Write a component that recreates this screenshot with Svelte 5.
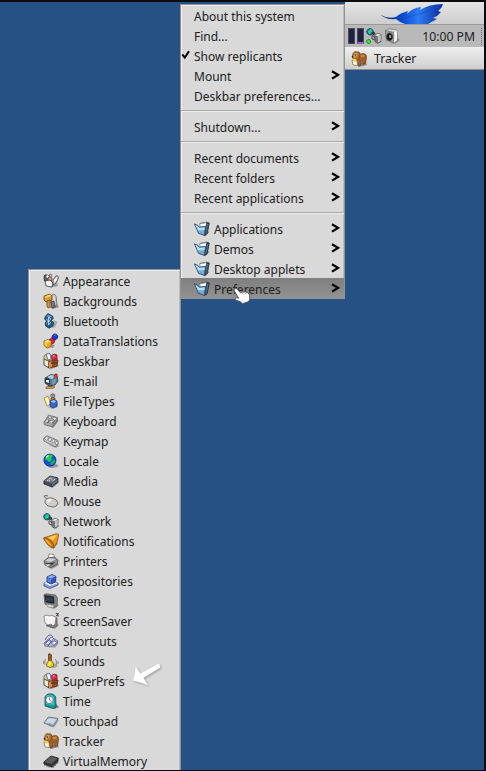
<script>
  const menuGroups = [
    [
      { label: 'About this system' },
      { label: 'Find...' },
      { label: 'Show replicants', checked: true },
      { label: 'Mount', sub: true },
      { label: 'Deskbar preferences...' }
    ],
    [{ label: 'Shutdown...', sub: true }],
    [
      { label: 'Recent documents', sub: true },
      { label: 'Recent folders', sub: true },
      { label: 'Recent applications', sub: true }
    ],
    [
      { label: 'Applications', sub: true, icon: 'folder' },
      { label: 'Demos', sub: true, icon: 'folder' },
      { label: 'Desktop applets', sub: true, icon: 'folder' },
      { label: 'Preferences', sub: true, icon: 'folder', selected: true }
    ]
  ];

  const preferences = [
    'Appearance', 'Backgrounds', 'Bluetooth', 'DataTranslations', 'Deskbar',
    'E-mail', 'FileTypes', 'Keyboard', 'Keymap', 'Locale', 'Media', 'Mouse',
    'Network', 'Notifications', 'Printers', 'Repositories', 'Screen',
    'ScreenSaver', 'Shortcuts', 'Sounds', 'SuperPrefs', 'Time', 'Touchpad',
    'Tracker', 'VirtualMemory'
  ];

  const K = '#26262b';
  const box = [
    ['M4 14L8 16L16 13L14 11Z', '#8a8a8a'],
    ['M1 6L6 8L6 15L1 12Z', '#f0e9cf', K],
    ['M6 8L15 7L14 13L6 15Z', '#9a5326', '#4b2410'],
    ['M6 9L9 8.5L9 14L6 15Z', '#d88b45'],
    ['M1 3L4 1L6 4L6 8L1 6Z', '#ead24b', '#5d5d80'],
    ['M3 1L7 .5L8 6L5 7Z', '#f5f5fa', '#4458a0'],
    ['M8.5 2.5Q11 0 14 2L14 7L9 7Z', '#e12a3c', '#7b1b2a'],
    ['M10 2L12 2L11 4L9.5 4Z', '#ff8a90'],
    ['M8 9.5L14 9L13.5 10.5L8 11Z', '#5b2a10']
  ];
  const globe = [
    ['M5 14Q10 16 15.5 13.5Q15 11 12 11Z', '#9a9a9a'],
    ['M7 1.2A6 6 0 1 1 6.9 1.2Z', '#174be0', '#0b236d'],
    ['M5 2Q9 1 10 3L8 5L9 7L6 9L4 7L2 7Q2 4 5 2Z', '#20d343'],
    ['M9 8L12 6L12 9L9 12L7 11Z', '#15b84a'],
    ['M3 3L6 2L5 4L3 5Z', '#a4f5cb']
  ];
  const network = [
    ['M10 14.5L13 15.8L16 13L15 12Z', '#909090'],
    ['M4 .6A3.2 3.2 0 1 1 3.9 .6Z', '#137fc0', '#12324d'],
    ['M3 2L5 1L6 3L5 5L3 6L2 4Z', '#2ed673'],
    ['M5.5 7L9 10M6 8L6 11L9 12', 'none', '#282828'],
    ['M8.6 7.4L11.4 5.4L15 6.4L14.8 13.4L11.6 15.2L9 13.6Z', '#77797b', '#4a4c4e'],
    ['M12 8L14.8 7L14.6 13L12 14.6Z', '#c2c4c6'],
    ['M9 7.4L11.6 5.8L14.8 6.6L12 8Z', '#e8e8e8'],
    ['M6 4.5L8 4L9 6L7 7Z', '#3c5750', '#222']
  ];
  const tracker = [
    ['M5 14L8 16L16 14L14 10Z', '#8b8b8b'],
    ['M7 3.4L13 2.6Q16 3.4 15.4 7L14.5 12.5L12.2 13.5L11.5 9.5L10 10L10 14L7 15L6 9Z', '#a0602a', '#6b4119'],
    ['M2.2 2.4L3.5 .8L8 1Q9.5 3 8.6 6L7 8.5L2.4 8L1.2 6Z', '#b0702f', '#6b4119'],
    ['M3.5 2L6.5 2L6 5L3 7L2 6Z', '#d69c59'],
    ['M9.5 4L13 3.4L14 5.2L10 6.4Z', '#cc8b45'],
    ['M1 9L6 9.5L6.5 14.5L2 14Z', '#f9f5e5', '#8b7750'],
    ['M1 8.5L3 7.6L6 8.8L4 11Z', '#ecd451'],
    ['M3.8 3.5h1.2v1.1h-1.2ZM.9 5.3h1.3v1.1h-1.3Z', '#17130f']
  ];

  const icons = {
    folder: [
      ['M8 13L11 15.6L15.5 11L14 10Z', '#8b8f93'],
      ['M6 2.5L12.6 1.2L15.2 2L13.2 12.5L10.4 14.5Z', '#4d6c88', '#27323e'],
      ['M5.6 3L12 1.6L12.6 3L10.8 11L7 11Z', '#fbfcff', '#8793a0'],
      ['M12.7 2.5L15 2.4L13 12.4L10.8 14.2Z', '#52728e', '#27323e'],
      ['M.4 2.8L3.6 4.4L5.4 6L11.4 5.4L10.6 14.4L4.6 12.4Z', '#74acd4', '#233d52'],
      ['M1.3 3.8L3.8 5.4L5.8 7L10.7 6.4L10.4 9L4 9.6Z', '#b3def5']
    ],
    Appearance: [
      ['M5 12L8 14.5L15 13L14 10Z', '#9b9b9b'],
      ['M1 4Q1 1 4 2L7 3L8 7L4 9L1.5 8Z', '#5f6064', '#28282c'],
      ['M3 3L5 2L6 4L4 5Z', '#fff'],
      ['M5 5Q8 2 9 6L8 9L5 8Z', '#dc9c83', '#56372f'],
      ['M2 8L7 7L10 10L9 14L3 13Z', '#f5f5f5', '#363636'],
      ['M6 2L8 1L9 3L7 4Z', '#fff', '#555'],
      ['M10 12L10 7L13 3Q16 2 15 6L13 10Z', '#dedee0', '#333'],
      ['M11 8L14 4L13 8Z', '#fff']
    ],
    Backgrounds: [
      ['M6 14L10 16L16 14L14 11Z', '#8f8f8f'],
      ['M8 3L11 1L13 3L14 12L10 14L8 10Z', '#c7c5c2', '#646260'],
      ['M11 3L11 12', 'none', '#fff'],
      ['M1 3L7 1L9 3L9 7L3 9L1 7Z', '#d79a2b', '#644515'],
      ['M1.5 3.5L7 1.5L8.4 3L3 5Z', '#ffd56c'],
      ['M4 8L7 7L7 14L5 15L4 13Z', '#dc9b2d', '#694614'],
      ['M8 9L11 8L12 14L9 15Z', '#7b7c82', '#393940']
    ],
    Bluetooth: [
      ['M6 15L12 14.5L14.5 9L11 7Z', '#a9a9a9'],
      ['M2.5 3L5 .6L9.6 3.2L10.2 5.5L8.3 7.6L10.6 9.6L9.8 13L6 15.2L2.6 13L2.2 9.5L3.8 8L1.6 6.2Z', '#235a86', '#143049'],
      ['M3.4 3.4L5.2 1.6L8.8 3.6L7 5.4Z', '#5b9ac4'],
      ['M3.2 6L7.6 9.6L5.5 12L5.5 4L7.8 6L3.4 10', 'none', '#cfe6f5']
    ],
    DataTranslations: [
      ['M6 14L10 15L12 12L9 11Z', '#999'],
      ['M6 7L9 4.5L12 7L11 10L8 11Z', '#df203b', '#7d172b'],
      ['M12 1A2.8 2.8 0 1 1 11.9 1Z', '#2038db', '#102165'],
      ['M11 2L13 1.5L12 3Z', '#8094ff'],
      ['M1 8L5 6.5L8.5 8.5L8 13.5L4 15L1 12.5Z', '#f3a514', '#805111'],
      ['M1.5 8L5 7L8 8.5L4 10Z', '#fff283'],
      ['M1.5 9L4 10.5L4 14L1.5 12Z', '#ffd635']
    ],
    Deskbar: box,
    SuperPrefs: box,
    'E-mail': [
      ['M3 14L8 13L12 14L9 16L3 15.5Z', '#d69a48', '#8b622c'],
      ['M6 11L9 11L9 14L6 14Z', '#8c643c'],
      ['M2 5L8 1.5L14 3L15 8L12 12L6 13L2 10Z', '#56798f', '#1e303c'],
      ['M3 4.5L8 2L13 3L9 6Z', '#afd0df'],
      ['M2 6Q5 2 7 7L7 12L2 10Z', '#263944'],
      ['M3 7L6 7L6 10L3 9Z', '#e5edf0'],
      ['M9 7L14 5L12 11L9 11.5Z', '#7297ab'],
      ['M11 5L12 1L14 1L14 4', '#ef3e45', '#8d1720']
    ],
    FileTypes: [
      ['M5 14L9 16L15 14L14 10Z', '#a0a0a0'],
      ['M1 5L5 3L8 11L4 13Z', '#fff5aa', '#8c8038'],
      ['M9.8 .8A2 2 0 1 1 9.7 .8Z', '#9c9ca1', '#43434a'],
      ['M8 5L12 5L12 9L8 9Z', '#d79632', '#624111'],
      ['M7 8L10.5 6.5L14 8L14 13L10.5 15L7 13Z', '#3766d0', '#18377f'],
      ['M7.5 8.3L10.5 7L13.4 8.2L10.5 10Z', '#9fbeff']
    ],
    Keyboard: [
      ['M6 13L10 15L15.5 8L14 5Z', '#808080'],
      ['M.8 9.6L5.5 2.2L14.6 4.6L13 9L9 13.6L1.5 11.8Z', '#a8a8a8', '#6a6a6a'],
      ['M2 8.5L4 6L6 7L4.4 10ZM5 4.6L6.4 2.8L9 3.6L7.6 6ZM6.4 9L8 7L10.4 8L8.6 11ZM9.6 5.6L11 4L13.8 5L12 8Z', '#dedede', '#777'],
      ['M4.6 10.2L6.2 7.2M9.8 11.2L11.6 8.4', 'none', '#4e4e4e']
    ],
    Keymap: [
      ['M6 12L13 15L16 13L14 10Z', '#a0a0a0'],
      ['M.6 5.4L4 2.8L15 7.6L15 11.6L12 13.8L1 8Z', '#c7c7c7', '#636363'],
      ['M1.2 5.4L4 3.4L5.6 5L3.5 7.4ZM5 6.4L7.2 4.8L8.8 6.4L7 9ZM8.5 8L10.7 6.4L12.2 7.8L10 10.6ZM12 9.6L14 8L15 9.4L13.3 12.3Z', '#eee', '#777']
    ],
    Locale: globe,
    Media: [
      ['M7 13L9 15L16 10L14 8Z', '#9d9d9d'],
      ['M.8 8L7 3L15 5L15 9L9 14L1 11Z', '#454d58', '#242932'],
      ['M1 8L7 3.5L14.5 5.5L9 10Z', '#717985'],
      ['M4 8L5.5 7L7 8.2M6 6L8 5L9 6.5M9.5 8L12 6.2', 'none', '#e9edf0'],
      ['M9 10.5L14.5 6.5L14.5 8.5L9 13Z', '#666f7d']
    ],
    Mouse: [
      ['M6 13Q12 16 15.5 11L13 9Z', '#929292'],
      ['M5.5 6Q1 5 1 3Q3 2 5 3', 'none', '#4b4b4b'],
      ['M2 8Q4 4 9 5Q14 6 15 10Q14 14 10 14Q4 14 2 10Z', '#ccccca', '#5c5c59'],
      ['M3 8Q5 5 8.5 6Q9 8 5 10Z', '#eeeeeb']
    ],
    Network: network,
    Notifications: [
      ['M8 14L10 15L15 11L13 7Z', '#999'],
      ['M.6 5L13 .8L15.6 1.2Q15.6 4 14 9L11 15L8 13.6Z', '#ee9516', '#8a520d'],
      ['M4 5L14.4 1.6L10 7.6Z', '#ffcb68'],
      ['M.6 5Q4 4.4 7.6 7Q11.4 11 11 15Q8 15.6 4.6 11.6Q1.6 8 .6 5Z', '#c4740f', '#80500f'],
      ['M1.8 6Q5 7 9.4 13.4Q6.6 12.6 4.4 9.8Q2.4 7.6 1.8 6Z', '#ffb43b']
    ],
    Printers: [
      ['M4 14L9 16L16 12L14 9Z', '#919191'],
      ['M5 5L6 1L11 1.5L12 6Z', '#fff', '#777'],
      ['M1 8Q4 4 11 4L15 7L14.5 11L8 14.5L2 12Z', '#8e8e8e', '#4a4a4a'],
      ['M2 8L6 5L13 6L8 9Z', '#ccc'],
      ['M2 10L7 10L12 9L8 13Z', '#333'],
      ['M2 11.4L6 11L8.4 12L4.4 13.4Z', '#fff', '#777']
    ],
    Repositories: [
      ['M1 10L6 8L15 10L15 12L7 15.5L1 13Z', '#8696dc', '#444f91'],
      ['M1 10L6 8L15 10L7 13Z', '#eef1ff'],
      ['M4 4L9 1.5L13 3.5L12.5 9L8 11L4 9Z', '#3156bc', '#1b2d69'],
      ['M4.5 4L9 2L12.5 3.5L8 5.5Z', '#91adff'],
      ['M4.5 5L8 6L8 10L4.5 8.5Z', '#5f83e3']
    ],
    Screen: [
      ['M6 14L12 16L16 12L13 10Z', '#a5a5a5'],
      ['M1 2L3 .8L12.4 2L14.4 5L14 13L10 15L2 11Z', '#87888b', '#555'],
      ['M1.2 1.8L11 3.4L11.4 11L2.4 9.6Z', '#18191e', '#666'],
      ['M2.5 3.4L9.7 4.6L10 9.2L3.2 8.2Z', '#323d55'],
      ['M3 11L11 12.4L10 15L4.6 13.6Z', '#dedede', '#888']
    ],
    ScreenSaver: [
      ['M6 14L12 16L16 12L13 10Z', '#a5a5a5'],
      ['M11 4L14 5L14 13L10 15L3 12.5L9 12Z', '#818181', '#555'],
      ['M1 3L4 2L6 3L9 2.5L13 4L12 11L10 13L8 11L5 12L2 10Z', '#fafafa', '#777'],
      ['M4 5L4 10M7 5L7 10M10 5L10 11', 'none', '#dedede'],
      ['M12.8 .6h2.8l-2.2 2.2h2.4', 'none', '#151515']
    ],
    Shortcuts: [
      ['M8 14L12 15L16 10L13 8Z', '#aaa'],
      ['M1 10L8 4L15 8L14 11L8 14L2 13Z', '#b5b6c4', '#62647e'],
      ['M2 10L5 7L8 9L5 12ZM6 6L9 4L12 7L9 9ZM8 10L11 8L14 9L11 12Z', '#e4e6f4', '#6670ae'],
      ['M2 7Q5 1 8 2L10 4M5 13L11 5M3 10L6 7', 'none', '#3446b1']
    ],
    Sounds: [
      ['M6 14Q11 17 15 13L12 10Z', '#a9a9a9'],
      ['M5.6 1Q7.5 0 8.4 2L8.4 8L5.6 8Z', '#a46023', '#56300f'],
      ['M4.4 9Q7 5.6 9.8 9L11 13Q7 16 3.4 13Z', '#edc713', '#786415'],
      ['M6 9L8 9L7 13L5 12.5Z', '#fff48a'],
      ['M2.5 6Q1 9 2 12M12.4 6Q14.4 9 13.4 12M.6 8L.6 11M15 8L15 11', 'none', '#777']
    ],
    Time: [
      ['M5 14L12 16L16 14L13 11Z', '#7b7b7b'],
      ['M2 4Q4 0 9 1Q13 2 12.8 6L13 14L10 15.5L2 13Z', '#159b9c', '#164f53'],
      ['M3 3Q8 0 11 4L11 12L3 11Z', '#43c6c5'],
      ['M6.5 3.2A3.7 3.7 0 1 1 6.4 3.2Z', '#f7faff', '#52687b'],
      ['M6.5 4.5V7L8.5 8.5', 'none', '#56627d']
    ],
    Touchpad: [
      ['M5 13L11 14.5L16 7L14 6Z', '#aaa'],
      ['M.8 10L5.5 4L15 5.5L11 12.5L9 13Z', '#a3b2c0', '#596773'],
      ['M2 9.5L6 5L14 6.2L10 11Z', '#ccd8e2'],
      ['M6 11.8L7.5 9.8', 'none', '#667989']
    ],
    Tracker: tracker,
    VirtualMemory: [
      ['M7 14L10 15L16 9L14 7Z', '#959595'],
      ['M.8 9L8 3L15.2 5L15 8L8.5 14L1 11Z', '#333', '#202020'],
      ['M1.5 9L8 3.6L14.5 5.4L8.5 11Z', '#5c5c5c'],
      ['M2 11L2 13M4 12L4 14M6 13L6 14.5M10 13L10 14.5M12 11L12 13M14 9L14 11', 'none', '#444']
    ],
    speaker: [
      ['M8 14L11 16L16 12L13 9Z', '#8d8d8d'],
      ['M1.4 2.4L5 .8L12.4 1.6L13.4 3.4L13 12.5L9.6 15.2L2.4 12Z', '#d8d8d8', '#777'],
      ['M9.8 4.2L13.2 3L12.8 12.4L9.8 14.8Z', '#f2f2f2'],
      ['M1.4 2.6L9.6 4.2L9.6 15L2.4 12Z', '#9a9a9a', '#777'],
      ['M5.6 5A3 3.8 0 1 1 5.5 5Z', '#141414', '#444'],
      ['M6.2 7A1.2 1.6 0 1 1 6.1 7Z', '#999']
    ],
    netStatus: [...network, ['M2.7 11.5A2 2 0 1 1 2.6 11.5Z', '#18ff18', '#096d18']]
  };
</script>

{#snippet icon(name)}
  <svg class="icon" viewBox="0 0 16 16" aria-hidden="true">
    {#each icons[name] as [d, fill, stroke]}
      <path {d} {fill} stroke={stroke ?? 'none'} stroke-width=".8" stroke-linejoin="round" />
    {/each}
  </svg>
{/snippet}

<main class="desktop">
  <aside class="deskbar">
    <div class="leaf">
      <svg viewBox="0 0 139 21" width="139" height="21">
        <defs>
          <linearGradient id="feather" x1="0" x2="1">
            <stop offset="0" stop-color="#0b1a60" />
            <stop offset=".35" stop-color="#0c49cf" />
            <stop offset=".6" stop-color="#2e7cf4" />
            <stop offset="1" stop-color="#0a2a9a" />
          </linearGradient>
        </defs>
        <path d="M36 12Q42 16 51 14Q55 10 63 8L62 11Q67 5 76 4L75 7Q84 1 98 1Q97 5 93 8L96 9Q93 13 88 15L92 16L83 21H60Q54 19 51 16Q41 17 36 12Z" fill="url(#feather)" />
        <path d="M51 15Q70 15 95 3" fill="none" stroke="#164fd0" stroke-width=".7" />
      </svg>
    </div>
    <div class="tray">
      <div class="cpu"><i></i><i class="low"></i></div>
      {@render icon('netStatus')}
      {@render icon('speaker')}
      <span class="clock">10:00 PM</span>
      <span class="grip"></span>
    </div>
    <div class="team">{@render icon('Tracker')}<span>Tracker</span></div>
  </aside>

  <nav class="menu main-menu">
    {#each menuGroups as group, g}
      {#if g}<div class="separator"></div>{/if}
      {#each group as item}
        <div class="row" class:selected={item.selected}>
          <span class="mark">
            {#if item.checked}
              <svg width="10" height="10" viewBox="0 0 10 10"><path d="M1.3 4.5L3.8 7.6L8 1.2" fill="none" stroke="#000" stroke-width="2" /></svg>
            {/if}
          </span>
          {#if item.icon}{@render icon(item.icon)}{/if}
          <span class="label">{item.label}</span>
          {#if item.sub}
            <svg class="chevron" width="9" height="10" viewBox="0 0 9 10"><path d="M1 1.2L7 4.9L1 8.6" fill="none" stroke="#000" stroke-width="2.2" /></svg>
          {/if}
        </div>
      {/each}
    {/each}
  </nav>

  <nav class="menu sub-menu">
    {#each preferences as name}
      <div class="row">{@render icon(name)}<span class="label">{name}</span></div>
    {/each}
  </nav>

  <svg class="hand" width="19" height="19" viewBox="0 0 18 18">
    <path d="M1.2 1.8Q2.5 .5 4 2L7.2 5.6L8.5 4.6L10 5L11.5 4.3L13 5.2L14.3 5.2L15.8 8L15.8 12L14.5 14L9 15.8L7 14L2.2 12.2Q1 10.8 3 10.3L5.3 10.5L1.4 4Q.6 2.8 1.2 1.8Z" fill="#fff" stroke="#444" stroke-width=".8" />
    <path d="M8.5 5L9.6 7.2M11.4 4.8L12.3 7" stroke="#888" stroke-width=".7" />
  </svg>
  <svg class="pointer" width="32" height="30" viewBox="0 0 32 30">
    <path d="M28 4.5L29.5 8.5L12.5 18.8L17 26.5Q9 23 2 21.5Q4.5 15 4.5 7.5L9.5 14.6Z" fill="#fff" />
  </svg>
</main>

<style>
  :global(body) { margin: 0; }
  .desktop {
    position: relative;
    box-sizing: border-box;
    width: 486px;
    height: 771px;
    overflow: hidden;
    background: #265184;
    border: solid #0c0c0e;
    border-width: 2px 2px 1px 0;
    font: 12px/20px 'Noto Sans', sans-serif;
    color: #202020;
  }
  .icon { width: 16px; height: 16px; flex: none; display: block; }
  .menu {
    position: absolute;
    box-sizing: border-box;
    background: #d9d9d9;
    border: 1px solid #929292;
    box-shadow: inset 1px 1px #eee, inset -1px 0 #bcbcbc;
  }
  .main-menu { left: 180px; top: 2px; width: 165px; height: 295px; }
  .sub-menu { left: 28px; top: 267px; width: 153px; height: 502px; }
  .row { display: flex; align-items: center; height: 20px; white-space: pre; }
  .row .icon { margin-top: 1px; }
  .main-menu .row { padding-right: 4px; }
  .main-menu .row .icon { margin-right: 4px; }
  .sub-menu .row { padding-left: 14px; gap: 4px; }
  .mark { width: 13px; height: 10px; flex: none; display: flex; }
  .label { padding-top: 3px; }
  .chevron { margin-left: auto; }
  .selected { background: linear-gradient(#7f7f7f, #929292); }
  .separator {
    height: 11px;
    background: linear-gradient(transparent 5px, #a8a8a8 5px, #a8a8a8 6px, #eee 6px, #eee 7px, transparent 7px);
  }
  .deskbar { width: 139px; margin-left: 345px; }
  .leaf { height: 22px; background: linear-gradient(#e4e4e4, #cecece); border-bottom: 1px solid #999; }
  .leaf svg { display: block; margin-top: 1px; }
  .leaf { display: flow-root; }
  .tray {
    box-sizing: border-box;
    height: 22px;
    display: flex;
    align-items: center;
    background: #b9b9b9;
    padding: 0 2px 0 3px;
    gap: 2px;
  }
  .cpu { display: flex; gap: 2px; }
  .cpu i { box-sizing: border-box; width: 7px; height: 16px; background: #202040; border: 1px solid #49495d; }
  .cpu .low { border-bottom: 2px solid #a05bc5; }
  .clock { margin-left: auto; margin-right: 4px; padding-top: 2px; font-size: 12.2px; }
  .grip { height: 17px; border-left: 1px dotted #666; }
  .team {
    box-sizing: border-box;
    height: 23px;
    display: flex;
    align-items: center;
    gap: 7px;
    padding-left: 6px;
    background: linear-gradient(#ededed, #cfcfcf);
    border-top: 1px solid #eee;
    border-bottom: 1px solid #8d8d8d;
    font-size: 12.3px;
  }
  .hand { position: absolute; left: 233px; top: 285px; }
  .pointer { position: absolute; left: 131px; top: 657px; filter: drop-shadow(1px 1px 1px #999); }
</style>
